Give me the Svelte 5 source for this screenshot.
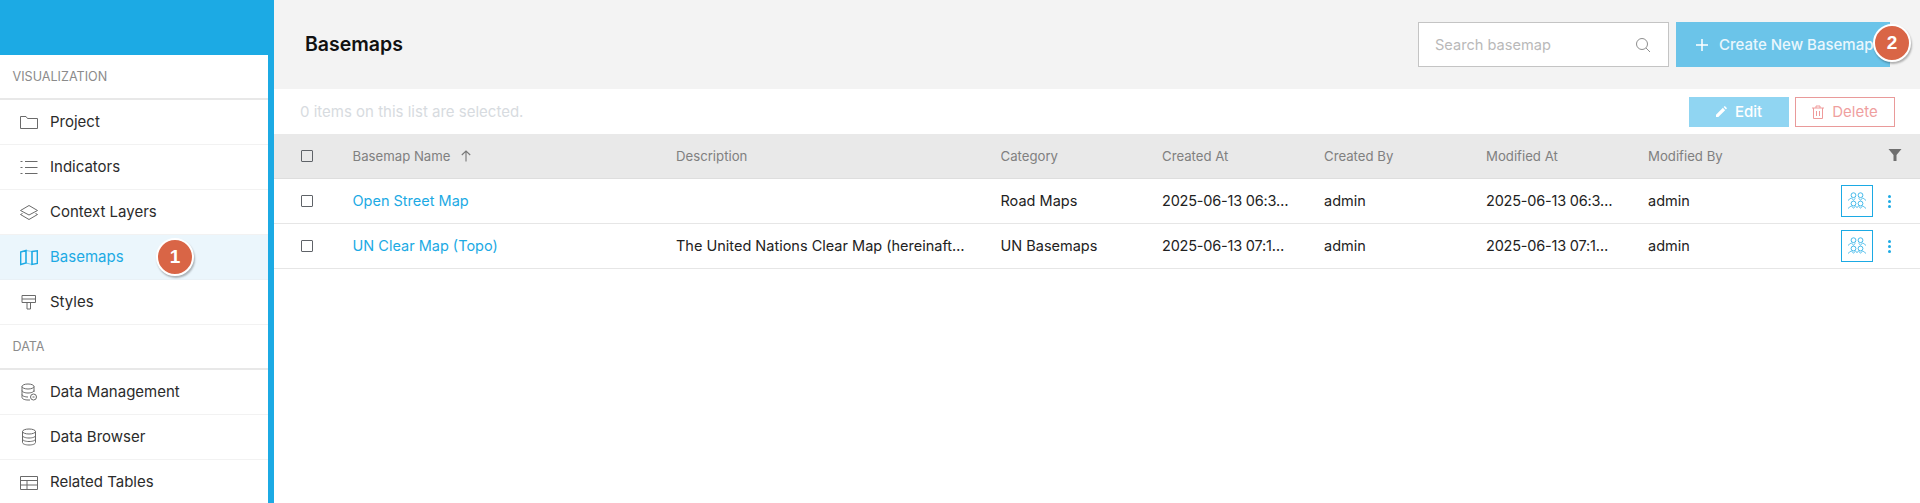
<script>
  const viz = [
    { label: 'Project', icon: 'folder' },
    { label: 'Indicators', icon: 'list' },
    { label: 'Context Layers', icon: 'layers' },
    { label: 'Basemaps', icon: 'map', active: true, badge: '1' },
    { label: 'Styles', icon: 'roller' }
  ];
  const data = [
    { label: 'Data Management', icon: 'dbm' },
    { label: 'Data Browser', icon: 'db' },
    { label: 'Related Tables', icon: 'table' }
  ];
  const cols = ['Description', 'Category', 'Created At', 'Created By', 'Modified At', 'Modified By'];
  const rows = [
    { name: 'Open Street Map', cells: ['', 'Road Maps', '2025-06-13 06:3…', 'admin', '2025-06-13 06:3…', 'admin'] },
    { name: 'UN Clear Map (Topo)', cells: ['The United Nations Clear Map (hereinaft…', 'UN Basemaps', '2025-06-13 07:1…', 'admin', '2025-06-13 07:1…', 'admin'] }
  ];
</script>

{#snippet navIcon(name)}
  <svg class="nav-icon" viewBox="0 0 18 18" width="18" height="18" fill="none" stroke="currentColor" stroke-width="1">
    {#if name === 'folder'}
      <path d="M0.5 3.500V15.500H17.500V5.500H7.500L6 3.500Z" />
    {:else if name === 'list'}
      <path d="M5 3.500H17.500M5 9.500H17.500M5 15.500H17.500" />
      <path d="M0.500 3.500H2.500M0.500 9.500H2.500M0.500 15.500H2.500" />
    {:else if name === 'layers'}
      <path d="M9 2.500L17.500 7.500L9 12L0.500 7.500Z" />
      <path d="M2.500 10.500L0.500 11.500L9 16.500L17.500 11.500L15.500 10.500" />
    {:else if name === 'map'}
      <path d="M0.700 4L6 2.500V15L0.700 16.500Z" stroke-width="1.400" />
      <path d="M12 3.500L17.300 2.800V15.500L12 16.500Z" stroke-width="1.400" />
      <path d="M6 2.500L12 3.500V16.500L6 15Z" stroke-width="0.600" />
    {:else if name === 'roller'}
      <path d="M2 2.500H15.500V9.500H2Z" />
      <path d="M2 6H15.500" />
      <path d="M7 9.500V16H10.500V9.500" />
    {:else if name === 'dbm'}
      <ellipse cx="8" cy="3.500" rx="6" ry="2.500" />
      <path d="M2 3.500V14.500C2 16 5 17 8 17H10M14 3.500V9M2 7.500C2 9 5 10 8 10S14 9 14 7.500M2 11.500C2 13 5 14 8 14" />
      <circle cx="13.500" cy="14" r="3" />
      <path d="M12.500 14H14.500" />
    {:else if name === 'db'}
      <ellipse cx="9" cy="3.500" rx="6.500" ry="2.500" />
      <path d="M2.500 3.500V14.500C2.500 16 5.500 17 9 17S15.500 16 15.500 14.500V3.500M2.500 7.500C2.500 9 5.500 10 9 10S15.500 9 15.500 7.500M2.500 11C2.500 12.500 5.500 13.500 9 13.500S15.500 12.500 15.500 11" />
    {:else}
      <path d="M0.500 3.500H17.500V16.500H0.500Z" />
      <path d="M0.500 7.500H17.500M0.500 12H17.500M7 7.500V16.500" />
    {/if}
  </svg>
{/snippet}

{#snippet people()}
  <svg viewBox="0 0 18 18" width="18" height="18" fill="none" stroke="currentColor" stroke-width="0.800">
    <circle cx="5.500" cy="3.200" r="2.400" />
    <circle cx="12.500" cy="3.200" r="2.400" />
    <circle cx="5.500" cy="11.500" r="2.400" />
    <circle cx="12.500" cy="11.500" r="2.400" />
    <path d="M0.500 8.500C1 7 2 6.500 3.500 6.200L5.500 8L7.500 6.200M10.500 6.200L12.500 8L14.500 6.200C16 6.500 17 7 17.500 8.500" />
    <path d="M0.500 16.500C1 15 2 14.500 3.500 14.200L5.500 16L7.500 14.200L9 15.500L10.500 14.200L12.500 16L14.500 14.200C16 14.500 17 15 17.500 16.500" />
  </svg>
{/snippet}

<div class="page">
  <aside class="sidebar">
    <div class="brand"></div>
    <div class="section">VISUALIZATION</div>
    {#each viz as item}
      <div class="nav" class:active={item.active}>
        {@render navIcon(item.icon)}
        <span>{item.label}</span>
        {#if item.badge}<b class="badge nav-badge">{item.badge}</b>{/if}
      </div>
    {/each}
    <div class="section">DATA</div>
    {#each data as item}
      <div class="nav">
        {@render navIcon(item.icon)}
        <span>{item.label}</span>
      </div>
    {/each}
  </aside>

  <main class="main">
    <header class="top">
      <h1>Basemaps</h1>
      <div class="search">
        <span>Search basemap</span>
        <svg viewBox="0 0 16 16" width="16" height="16" fill="none" stroke="#8e8e8e" stroke-width="1"><circle cx="7" cy="7" r="5.500" /><path d="M11 11L15 15" /></svg>
      </div>
      <div class="create">
        <svg viewBox="0 0 14 14" width="14" height="14" fill="none" stroke="#fff" stroke-width="1.500"><path d="M7 1V13M1 7H13" /></svg>
        <span>Create New Basemap</span>
        <b class="badge top-badge">2</b>
      </div>
    </header>

    <div class="actions">
      <span class="selected">0 items on this list are selected.</span>
      <div class="edit">
        <svg viewBox="0 0 12 12" width="11" height="11" fill="#fff"><path d="M0 12V9.500L7.500 2L10 4.500L2.500 12ZM8.300 1.200L9.300 0.200Q9.600 0 9.900 0.200L11.800 2.100Q12 2.400 11.800 2.700L10.800 3.700Z" /></svg>
        <span>Edit</span>
      </div>
      <div class="delete">
        <svg viewBox="0 0 12 14" width="12" height="14" fill="none" stroke="#ef9a9a" stroke-width="1"><path d="M0 3H12M4 3V1H8V3M1.500 3V13.500H10.500V3M4.500 6V11M7.500 6V11" /></svg>
        <span>Delete</span>
      </div>
    </div>

    <div class="row head">
      <div class="check-cell"><i class="box"></i></div>
      <div class="cell name">Basemap Name
        <svg class="sort" viewBox="0 0 12 12" width="12" height="12" fill="none" stroke="#777" stroke-width="1.100"><path d="M6 11.500V1M1.800 5L6 1L10.200 5" /></svg>
      </div>
      {#each cols as c}<div class="cell">{c}</div>{/each}
      <div class="tools">
        <svg class="funnel" viewBox="0 0 14 14" width="14" height="14" fill="#6f6f6f"><path d="M0.500 1H13.500L8.500 7V13H5.500V7Z" /></svg>
      </div>
    </div>

    {#each rows as r}
      <div class="row">
        <div class="check-cell"><i class="box"></i></div>
        <div class="cell name link">{r.name}</div>
        {#each r.cells as c}<div class="cell val" class:date={c.startsWith('2025')}>{c}</div>{/each}
        <div class="tools">
          <div class="share">{@render people()}</div>
          <div class="dots"><i></i><i></i><i></i></div>
        </div>
      </div>
    {/each}
  </main>
</div>

<style>
  :global(body) { margin: 0; background: #fff; }
  .page {
    display: flex;
    width: 1920px;
    height: 503px;
    overflow: hidden;
    font-family: Inter, "Liberation Sans", sans-serif;
    font-size: 14.500px;
    color: #222;
  }
  .sidebar {
    width: 268px;
    flex: none;
    border-right: 6px solid #1caae4;
    overflow: hidden;
  }
  .brand { height: 55px; background: #1caae4; }
  .section {
    height: 45px;
    box-sizing: border-box;
    padding: 0 0 0 12.500px;
    display: flex;
    align-items: center;
    font-size: 12.600px;
    color: #8b8b8b;
    border-bottom: 2px solid #e8e8e8;
  }
  .nav {
    height: 45px;
    box-sizing: border-box;
    display: flex;
    align-items: center;
    padding-left: 20px;
    gap: 12px;
    border-bottom: 1px solid #f2f2f2;
    color: #2b2b2b;
    font-size: 15px;
    position: relative;
  }
  .nav span { padding-bottom: 2px; }
  .nav-icon { color: #6a6a6a; flex: none; }
  .nav.active { background: #ebf6fc; color: #1caae4; border-bottom-color: #e9f1f6; }
  .nav.active .nav-icon { color: #1caae4; }
  .badge {
    position: absolute;
    width: 38px;
    height: 38px;
    box-sizing: border-box;
    border-radius: 50%;
    background: #d96546;
    color: #fff;
    border: 2px solid #fff;
    box-shadow: 1px 2px 2px rgba(0, 0, 0, 0.28);
    display: flex;
    align-items: center;
    justify-content: center;
    font-size: 19px;
    font-weight: 700;
    font-family: "Liberation Sans", sans-serif;
  }
  .nav-badge { left: 156px; top: 3px; }
  .main { flex: 1; min-width: 0; }
  .top {
    height: 89px;
    background: #f3f3f3;
    display: flex;
    align-items: center;
    padding-left: 31px;
    box-sizing: border-box;
  }
  h1 { margin: 0 0 2px; font-size: 19.500px; font-weight: 600; color: #111; flex: 1; }
  .search {
    width: 251px;
    height: 45px;
    box-sizing: border-box;
    background: #fff;
    border: 1px solid #c4c4c4;
    display: flex;
    align-items: center;
    justify-content: space-between;
    padding: 0 17px 0 16px;
    color: #b9b9b9;
    font-size: 14.600px;
  }
  .create {
    position: relative;
    margin-left: 7px;
    margin-right: 30px;
    width: 214px;
    height: 45px;
    box-sizing: border-box;
    background: #6bc4e9;
    color: #eaf7fd;
    display: flex;
    align-items: center;
    gap: 10px;
    padding-left: 19px;
    font-size: 15px;
    font-weight: 500;
    white-space: nowrap;
  }
  .create span { padding-bottom: 1px; }
  .top-badge { left: 197px; top: 2px; }
  .actions {
    height: 45px;
    box-sizing: border-box;
    display: flex;
    align-items: center;
    padding: 0 25px 0 26px;
  }
  .selected { color: #d7dbe0; flex: 1; font-size: 15px; }
  .edit, .delete {
    width: 100px;
    height: 30px;
    box-sizing: border-box;
    display: flex;
    align-items: center;
    justify-content: center;
    gap: 8px;
    font-size: 15px;
  }
  .edit { background: #90d5f2; color: #fff; font-weight: 500; }
  .delete { margin-left: 6px; border: 1px solid #e99a9a; color: #ef9f9f; }
  .row {
    display: grid;
    grid-template-columns: 78px 324px 324.500px 161.500px 162px 162px 162px 1fr;
    height: 45px;
    box-sizing: border-box;
    align-items: center;
    border-bottom: 1px solid #e6e6e6;
    position: relative;
  }
  .row.head { background: #e9e9e9; color: #808080; border-bottom: 1px solid #dedede; height: 45px; font-size: 13.200px; }
  .check-cell { padding-left: 26.500px; display: flex; }
  .box {
    width: 10px;
    height: 10px;
    border: 1px solid #5f6368;
    border-radius: 1px;
    background: #fff;
  }
  .head .box { background: transparent; }
  .cell { white-space: nowrap; overflow: hidden; padding-bottom: 2px; }
  .head .cell { padding-bottom: 1px; }
  .val { color: #222; }
  .date { letter-spacing: -0.200px; }
  .name { display: flex; align-items: center; gap: 9px; padding-left: 0.500px; }
  .link { color: #1caae4; }
  .sort { flex: none; }
  .tools {
    position: absolute;
    right: 0;
    top: 0;
    bottom: 0;
    display: flex;
    align-items: center;
    padding-right: 22px;
  }
  .funnel { margin-right: -4px; margin-bottom: 2px; }
  .share {
    width: 32px;
    height: 32px;
    box-sizing: border-box;
    border: 1px solid #1caae4;
    color: #1caae4;
    display: flex;
    align-items: center;
    justify-content: center;
  }
  .dots {
    width: 32px;
    display: flex;
    flex-direction: column;
    align-items: center;
    gap: 2px;
    margin-right: -7px;
  }
  .dots i { width: 3px; height: 3px; border-radius: 50%; background: #1caae4; }
</style>
